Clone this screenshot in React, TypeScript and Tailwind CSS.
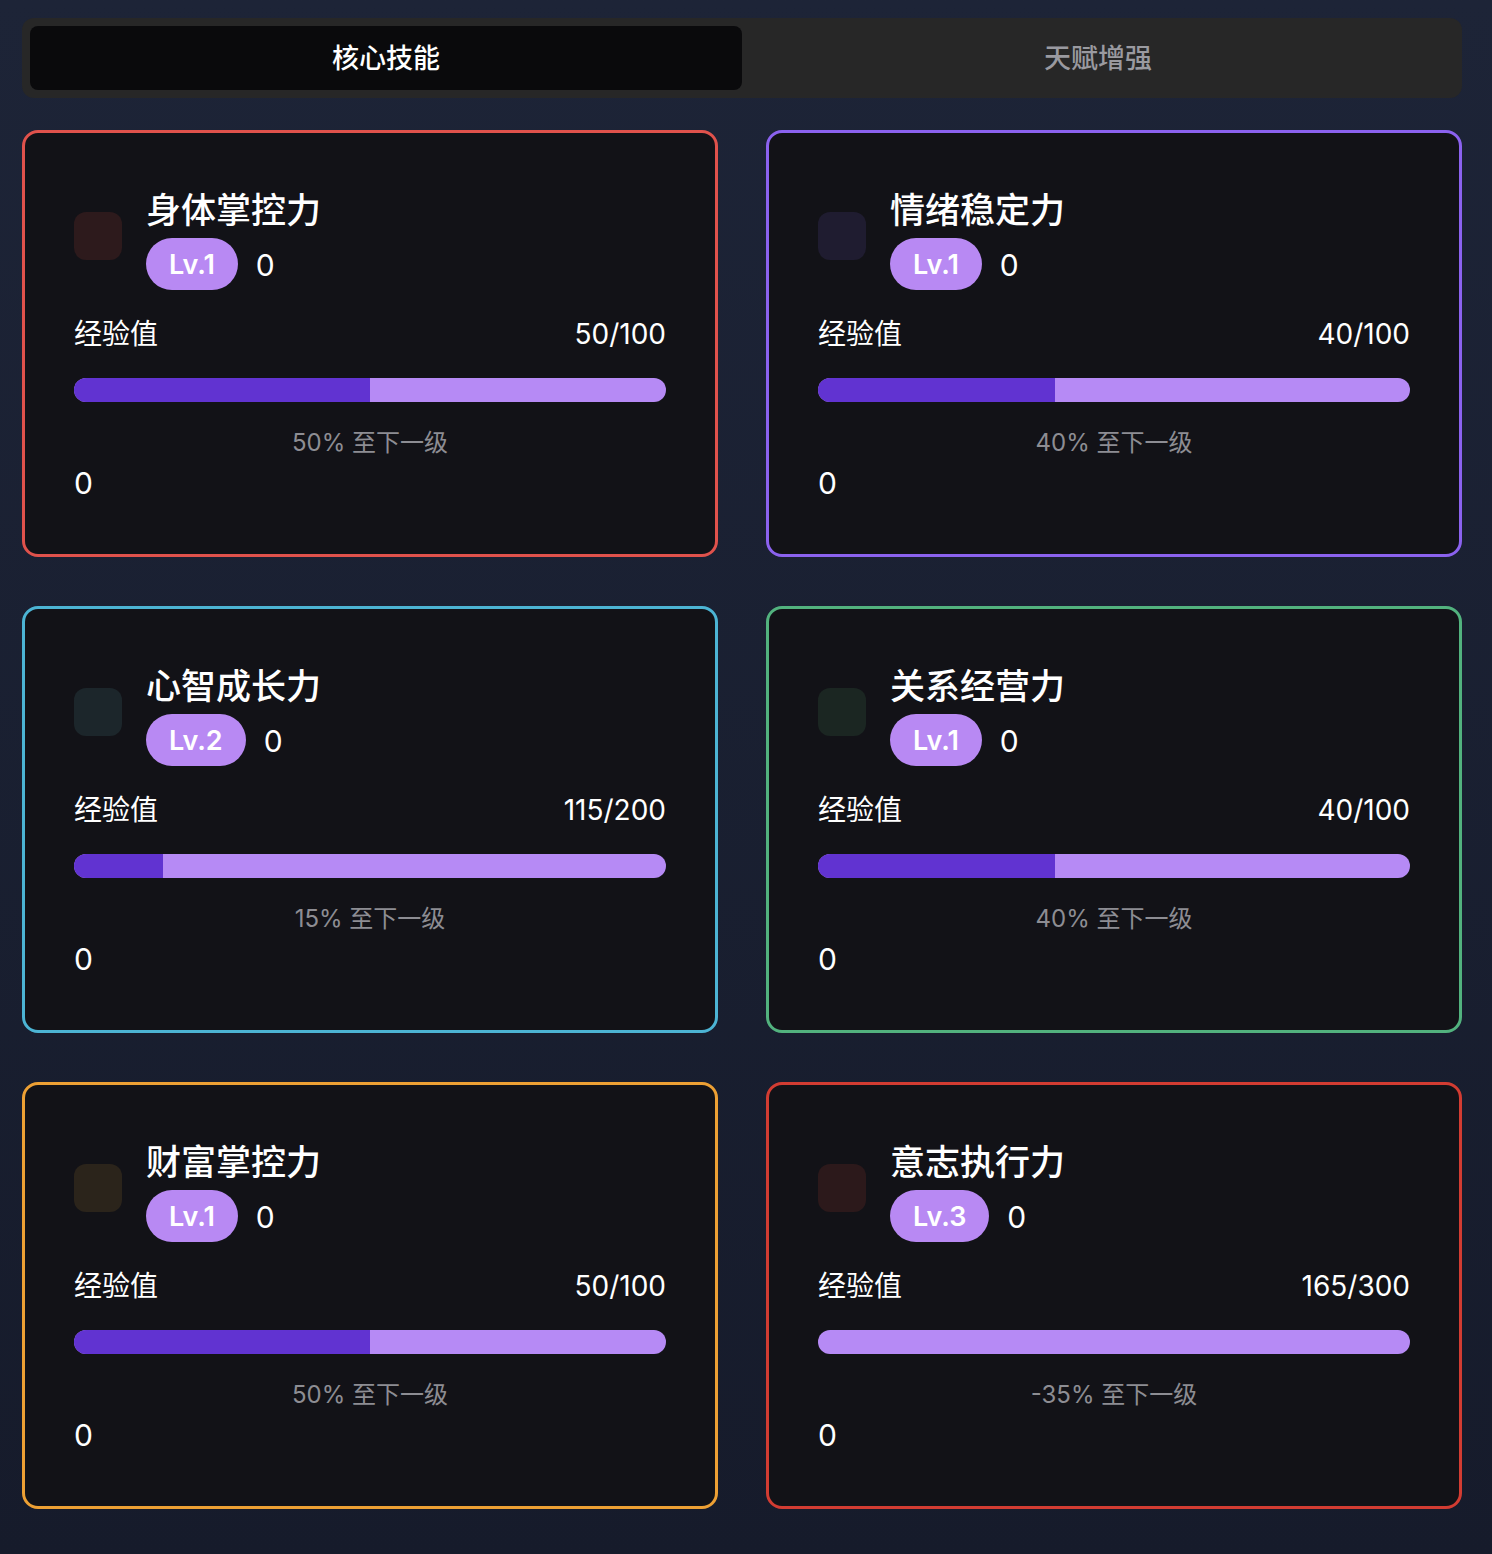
import React from "react";

type Skill = {
  name: string;
  level: number;
  exp: number;
  max: number;
  border: string;
  iconBg: string;
};

const skills: Skill[] = [
  { name: "身体掌控力", level: 1, exp: 50, max: 100, border: "border-[#e0524c]", iconBg: "bg-[#2d1a1c]" },
  { name: "情绪稳定力", level: 1, exp: 40, max: 100, border: "border-[#8b62ef]", iconBg: "bg-[#1f1c30]" },
  { name: "心智成长力", level: 2, exp: 115, max: 200, border: "border-[#4cb4d4]", iconBg: "bg-[#1c262b]" },
  { name: "关系经营力", level: 1, exp: 40, max: 100, border: "border-[#52b27e]", iconBg: "bg-[#1b2622]" },
  { name: "财富掌控力", level: 1, exp: 50, max: 100, border: "border-[#eda034]", iconBg: "bg-[#2b241b]" },
  { name: "意志执行力", level: 3, exp: 165, max: 300, border: "border-[#d23c32]", iconBg: "bg-[#2c191b]" },
];

const font = { fontFamily: '"Inter", "Noto Sans CJK SC", sans-serif' };

const SkillCard = ({ skill }: { skill: Skill }) => {
  const shown = skill.exp - (skill.level - 1) * 100;
  const pct = skill.level === 1 ? shown : skill.level === 2 ? 15 : -35;
  const fill = Math.max(0, pct);

  return (
    <div className={`h-[427px] rounded-2xl border-[3px] ${skill.border} bg-[#121217] px-[49px] pt-[54px]`}>
      <div className="flex items-center gap-6">
        <div className={`mb-[6px] h-12 w-12 shrink-0 rounded-xl ${skill.iconBg}`} />
        <div className="flex flex-col">
          <h2 className="text-[35px] font-medium leading-[46px] text-white">{skill.name}</h2>
          <div className="mt-[5px] flex items-center gap-[18px]">
            <span className="flex h-[52px] items-center rounded-full bg-[#b889f3] px-[23px] pt-[2px] text-[27px] font-semibold text-white">
              Lv.{skill.level}
            </span>
            <span className="pt-[2px] text-[30px] text-white">0</span>
          </div>
        </div>
      </div>

      <div className="mt-[24px] flex items-center justify-between text-[28px] leading-10 text-white">
        <span>经验值</span>
        <span>
          {skill.exp}/{skill.max}
        </span>
      </div>

      <div className="mt-[24px] h-6 w-full overflow-hidden rounded-full bg-[#b68af5]">
        <div className="h-full bg-[#6133d1]" style={{ width: `${fill}%` }} />
      </div>

      <p className="mt-[25px] text-center text-[24px] leading-8 text-[#8d8d93]">{pct}% 至下一级</p>
      <p className="mt-[6px] text-[30px] leading-9 text-white">0</p>
    </div>
  );
};

export default function App() {
  return (
    <div className="min-h-[1554px] w-full bg-gradient-to-b from-[#1d2437] to-[#161b2b] pl-[22px] pr-[30px] pt-[18px]" style={font}>
      <div className="flex h-20 rounded-xl bg-[#272727] p-2">
        <button className="flex-1 rounded-lg bg-[#0a0a0c] pt-[2px] text-[27px] font-medium text-white">核心技能</button>
        <button className="flex-1 rounded-lg pt-[2px] text-[27px] font-medium text-[#9a9aa0]">天赋增强</button>
      </div>

      <div className="mt-8 grid grid-cols-2 gap-x-12 gap-y-[49px]">
        {skills.map((s) => (
          <SkillCard key={s.name} skill={s} />
        ))}
      </div>
    </div>
  );
}
